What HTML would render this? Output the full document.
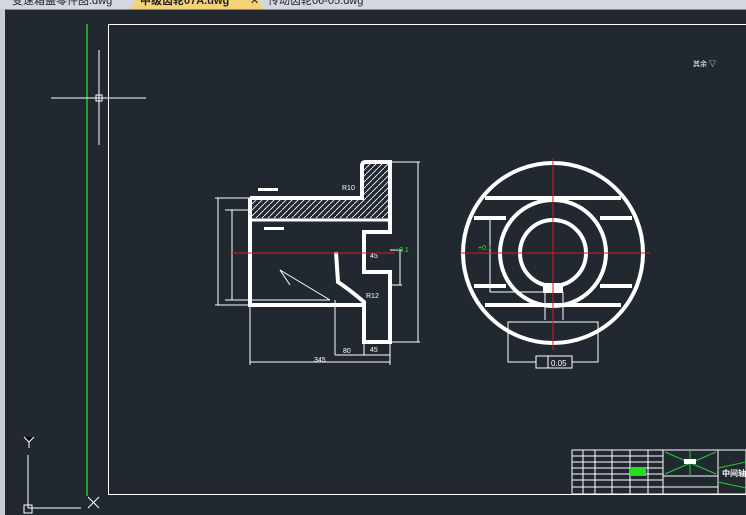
<!DOCTYPE html>
<html><head><meta charset="utf-8"><style>
html,body{margin:0;padding:0;width:746px;height:515px;overflow:hidden;background:#212830}
</style></head><body>
<svg width="746" height="515" viewBox="0 0 746 515" xmlns="http://www.w3.org/2000/svg" style="position:absolute;left:0;top:0;font-family:'Liberation Sans','Noto Sans CJK SC',sans-serif">
<defs><pattern id="h" width="6" height="6" patternUnits="userSpaceOnUse"><path d="M0 6 L6 0" stroke="#fff" stroke-width="0.8"/></pattern></defs>
<rect x="0" y="0" width="746" height="9" fill="#d4d8de"/>
<path d="M130 9 L136 0 L258 0 L264 9 Z" fill="#f5d27a"/>
<text x="12" y="4" font-size="11" fill="#222">变速箱盖零件图.dwg</text>
<text x="140" y="4" font-size="11" font-weight="bold" fill="#222">中级齿轮07A.dwg</text>
<text x="250" y="4" font-size="11" fill="#222">✕</text>
<text x="268" y="4" font-size="11" fill="#222">传动齿轮06-05.dwg</text>
<rect x="0" y="9" width="5" height="506" fill="#c9ccd2"/>
<rect x="5" y="9" width="741" height="1" fill="#888"/>
<line x1="87" y1="24" x2="87" y2="496" stroke="#22c83a" stroke-width="1.5"/>
<rect x="108.5" y="24.5" width="640" height="470" fill="none" stroke="#fff"/>
<g stroke="#fff" stroke-width="1">
<line x1="51" y1="98" x2="146" y2="98"/><line x1="99" y1="50" x2="99" y2="145"/>
<rect x="96" y="95" width="6" height="6" fill="none"/>
<path d="M28 508 L28 455 M28 508 L81 508 M24 437 L29 442 L34 437 M29 442 L29 448 M88 497 L99 508 M99 497 L88 508"/>
<rect x="24" y="505" width="8" height="8" fill="none"/>
</g>
<path d="M252 200 L364 200 L364 164 L388 164 L388 218 L252 218 Z" fill="url(#h)"/>
<g stroke="#fff" fill="none">
<path d="M250 198 L362 198 L362 166 Q362 162 366 162 L390 162 L390 232 L364 232 L364 272 L390 272 L390 342 L364 342 L364 302 Q350 290 338 282 L336 252 M250 198 L250 305 L362 305" stroke-width="4"/>
<line x1="250" y1="220" x2="390" y2="220" stroke-width="3"/>
<g stroke-width="1">
<path d="M215 198 L250 198 M215 305 L250 305 M218 198 L218 305 M232 210 L232 300 M225 210 L250 210 M225 300 L330 300 M290 285 L280 270 L330 300 M390 162 L420 162 M390 342 L420 342 M418 162 L418 342 M390 250 L402 250 M390 285 L402 285 M400 250 L400 285 M250 305 L250 365 M390 342 L390 365 M335 300 L335 355 M364 342 L364 355 M250 362 L390 362 M335 355 L390 355"/>
</g>
</g>
<g fill="#fff" font-size="7">
<text x="342" y="190">R10</text><text x="366" y="298">R12</text><text x="343" y="353">80</text><text x="370" y="352">45</text><text x="314" y="362">345</text><text x="370" y="258">45</text>
<rect x="258" y="188" width="20" height="3"/><rect x="264" y="227" width="20" height="3"/>
</g>
<g stroke="#fff" fill="none" stroke-width="4">
<circle cx="553" cy="253" r="90"/><circle cx="553" cy="253" r="53"/><circle cx="553" cy="253" r="33"/>
<path d="M485 198 L621 198 M474 218 L506 218 M600 218 L632 218 M474 286 L506 286 M600 286 L632 286 M485 305 L621 305"/>
</g>
<rect x="543" y="283" width="20" height="10" fill="#fff"/>
<g stroke="#fff" fill="none" stroke-width="1">
<path d="M490 220 L490 292 M490 292 L545 292 M545 292 L545 320 M563 292 L563 320"/>
<rect x="508" y="322" width="90" height="40"/>
<rect x="536" y="356" width="36" height="12" fill="#212830"/>
<line x1="548" y1="356" x2="548" y2="368"/>
</g>
<text x="551" y="366" font-size="8" fill="#fff">0.05</text>
<g stroke="#e01818" stroke-width="1">
<line x1="230" y1="253" x2="395" y2="253"/>
<line x1="460" y1="253" x2="650" y2="253"/>
<line x1="553" y1="158" x2="553" y2="350"/>
</g>
<text x="395" y="252" font-size="7" fill="#22ee33">+0.1</text>
<text x="478" y="250" font-size="7" fill="#22ee33">+0.1</text>
<text x="693" y="66" font-size="7" fill="#fff">其余 ▽</text>
<g stroke="#fff" stroke-width="1" fill="none">
<rect x="572" y="450" width="174" height="44"/>
<path d="M572 456 H663 M572 462 H663 M572 468 H663 M572 474 H663 M572 480 H663 M572 487 H663 M583 450 V494 M595 450 V494 M612 450 V494 M630 450 V494 M648 450 V494 M663 450 V494 M718 450 V494 M663 476 H718 M663 487 H718"/>
</g>
<rect x="630" y="467" width="16" height="9" fill="#22dd22"/>
<g stroke="#22cc33" stroke-width="1"><path d="M665 452 L716 474 M716 452 L665 474 M690 450 V476 M718 468 L746 462 M718 482 L746 488"/></g>
<rect x="684" y="459" width="12" height="5" fill="#fff"/>
<text x="722" y="476" font-size="8" fill="#fff" font-weight="bold">中间轴齿</text>
</svg>
</body></html>
